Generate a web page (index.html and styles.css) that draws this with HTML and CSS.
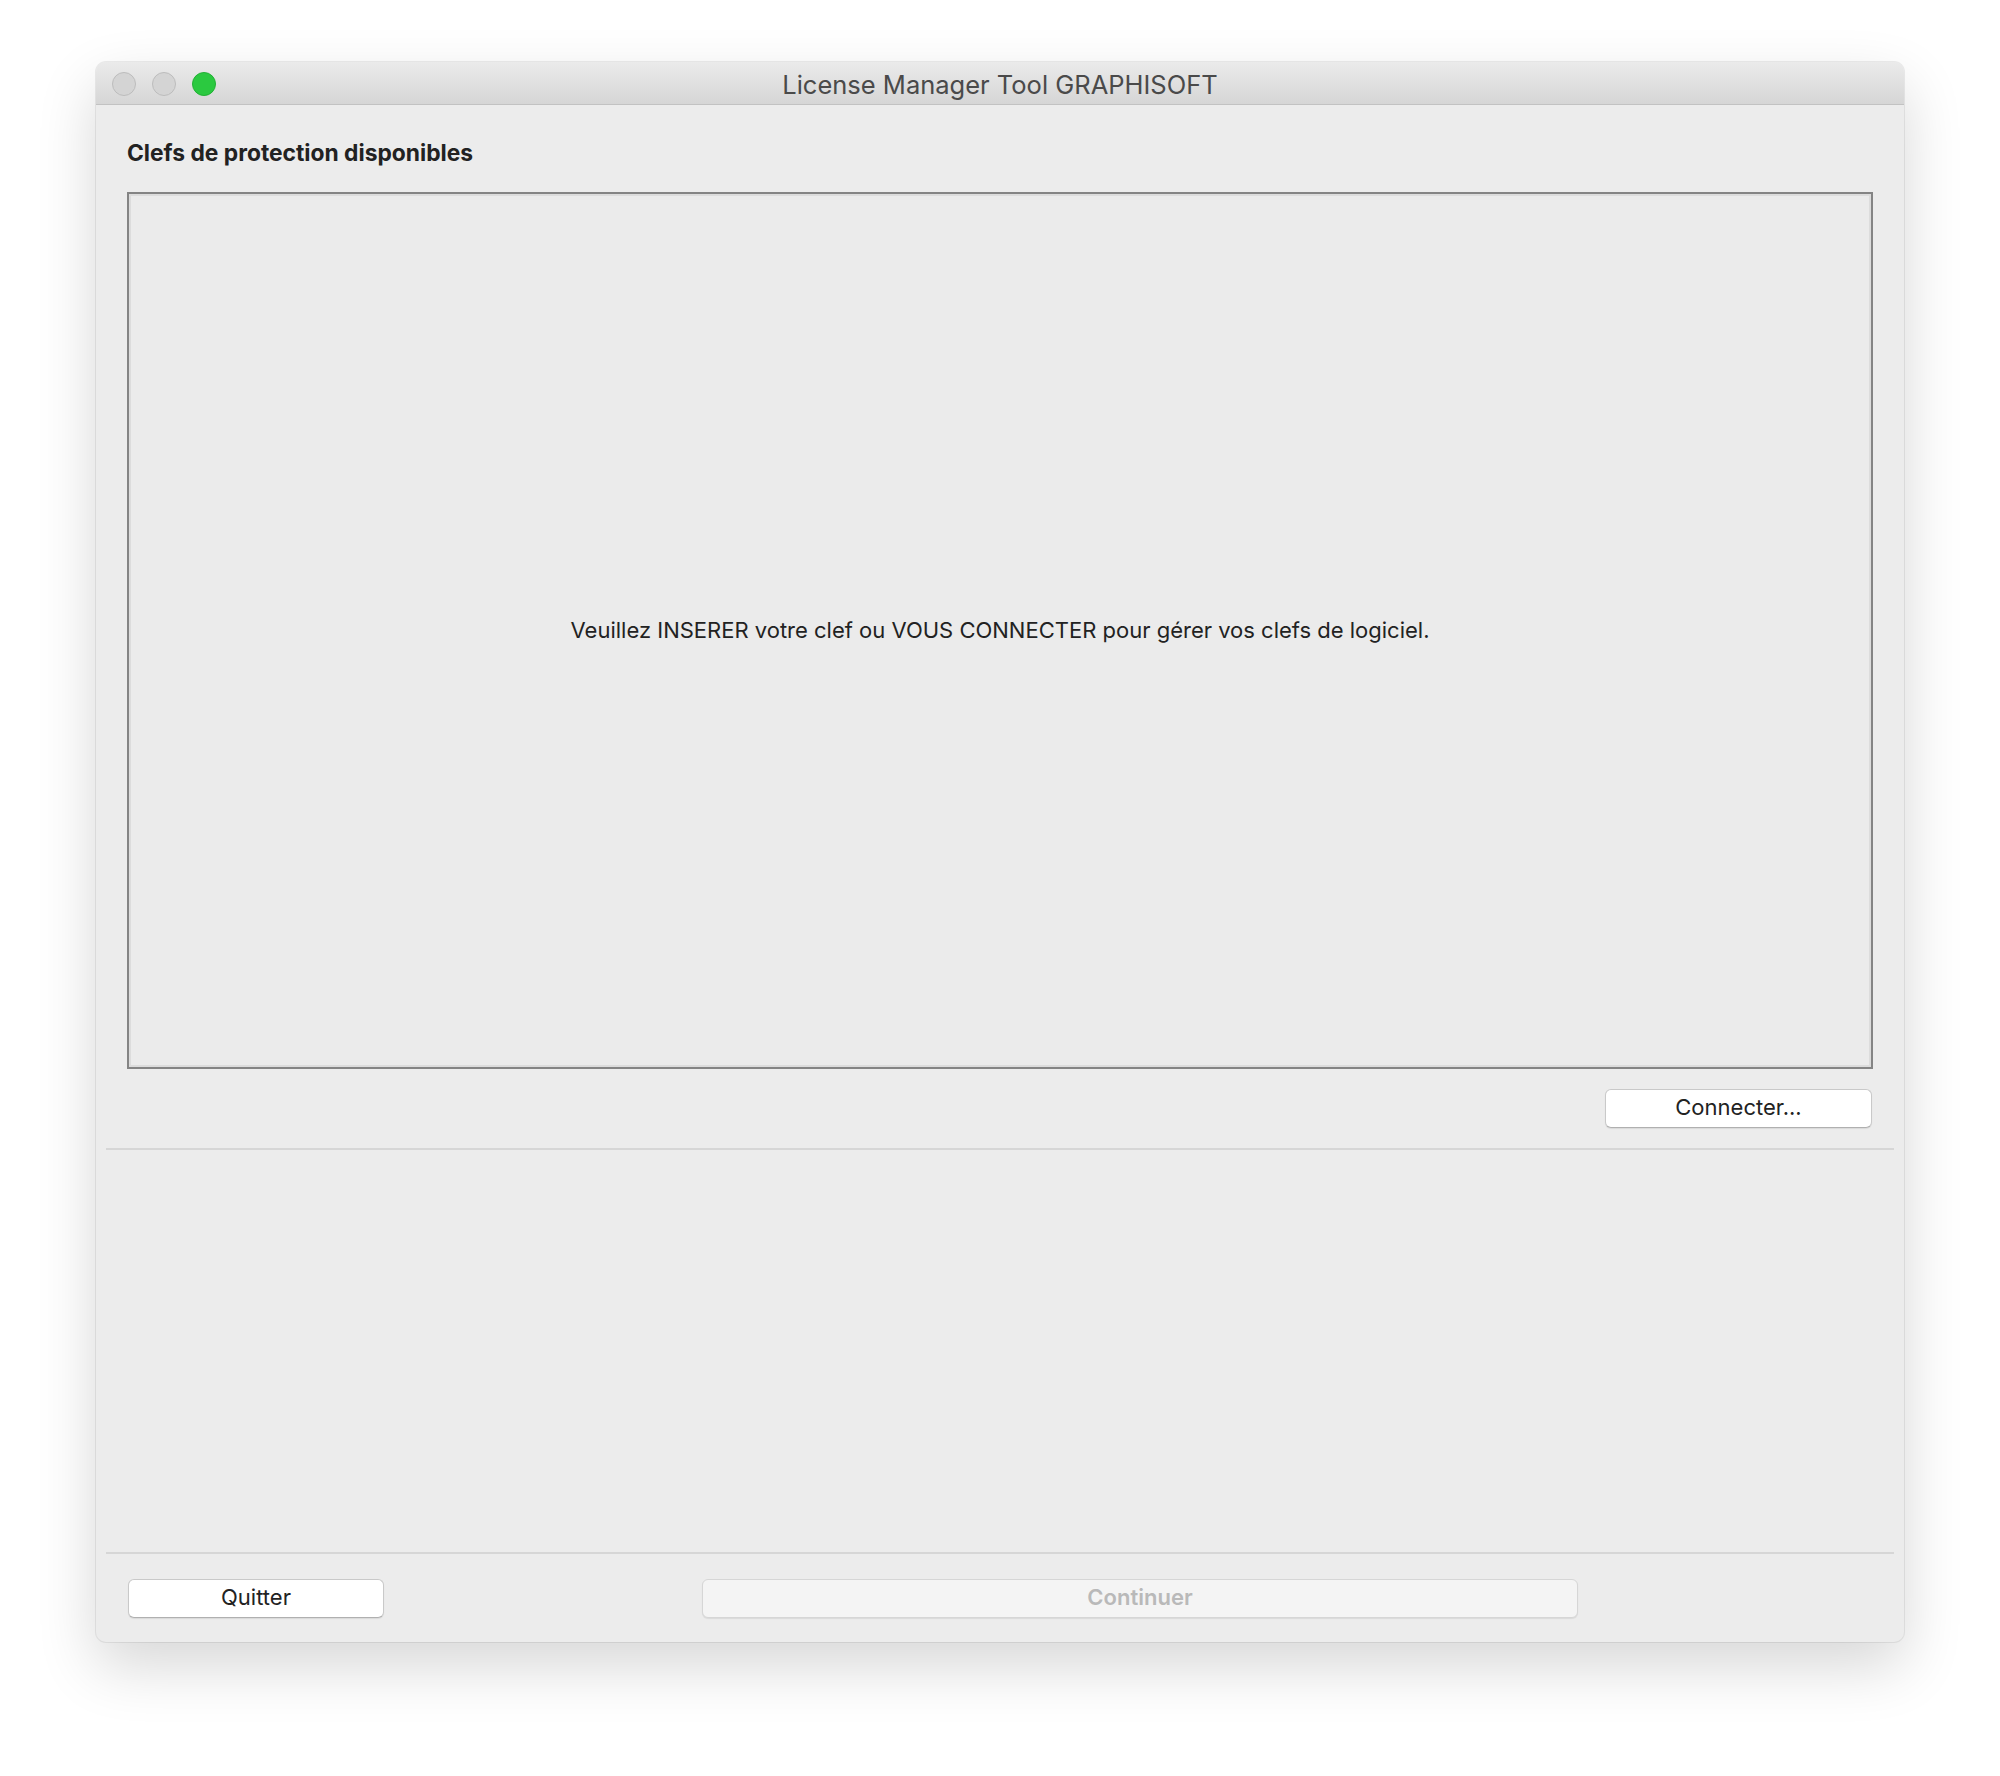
FILE: index.html
```html
<!DOCTYPE html>
<html lang="fr">
<head>
  <meta charset="UTF-8">
  <title>License Manager Tool GRAPHISOFT</title>
  <link rel="stylesheet" href="styles.css">
</head>
<body>

  <div class="window">
    <div class="titlebar">
      <div class="lights">
        <span class="light"></span>
        <span class="light"></span>
        <span class="light green"></span>
      </div>
      <div class="title">License Manager Tool GRAPHISOFT</div>
    </div>

    <div class="content">
      <h3 class="heading">Clefs de protection disponibles</h3>

      <div class="keylist">
        <p>Veuillez INSERER votre clef ou VOUS CONNECTER pour gérer vos clefs de logiciel.</p>
      </div>

      <div class="row-right">
        <button class="btn connect">Connecter...</button>
      </div>
    </div>

    <div class="separator"></div>
    <div class="spacer"></div>
    <div class="separator"></div>

    <div class="footer">
      <button class="btn quit">Quitter</button>
      <button class="btn continue" disabled>Continuer</button>
    </div>
  </div>

</body>
</html>
```

FILE: styles.css
```css
body {
  margin: 0;
  background: #ffffff;
  font-family: Inter, "Liberation Sans", sans-serif;
  color: #222222;
  padding: 62px 0 0 96px;
  height: 1776px;
  box-sizing: border-box;
}

.window {
  width: 1808px;
  height: 1580px;
  background: #ececec;
  border-radius: 10px;
  box-shadow: 0 24px 60px rgba(0, 0, 0, 0.16), 0 0 0 1px rgba(0, 0, 0, 0.07);
  display: flex;
  flex-direction: column;
  overflow: hidden;
}

.titlebar {
  height: 42px;
  background: linear-gradient(to bottom, #ebebeb, #d6d6d6);
  border-bottom: 1px solid #c2c2c2;
  position: relative;
  display: flex;
  align-items: center;
  justify-content: center;
}

.lights {
  position: absolute;
  left: 16px;
  top: 10px;
  display: flex;
  gap: 16px;
}

.light {
  width: 22px;
  height: 22px;
  border-radius: 50%;
  background: #d4d4d4;
  border: 1px solid #bcbcbc;
}

.light.green {
  background: #2bc940;
  border-color: #23b035;
}

.title {
  font-size: 25.5px;
  color: #4a4a4a;
  margin-top: 2px;
}

.content {
  padding: 0 31px;
}

.heading {
  margin: 0;
  padding-top: 36px;
  height: 51px;
  font-size: 22.8px;
  font-weight: 700;
  color: #222222;
  line-height: 24px;
}

.keylist {
  height: 873px;
  border: 2px solid #848484;
  box-shadow: inset 2px 2px 0 #dcdcdc, inset -2px -2px 0 #dcdcdc;
  background: #ebebeb;
  display: flex;
  align-items: center;
  justify-content: center;
}

.keylist p {
  margin: 0 0 2px;
  font-size: 22px;
  color: #222222;
}

.row-right {
  display: flex;
  justify-content: flex-end;
  padding-top: 20px;
  height: 59px;
}

.btn {
  font-family: Inter, "Liberation Sans", sans-serif;
  font-size: 22px;
  height: 39px;
  background: #ffffff;
  color: #222222;
  border: 1px solid #c9c9c9;
  border-bottom-color: #b0b0b0;
  border-radius: 6px;
  box-shadow: 0 1px 1px rgba(0, 0, 0, 0.08);
  padding: 0 0 3px;
}

.connect {
  width: 267px;
  margin-right: 1px;
}

.separator {
  height: 2px;
  background: #d6d6d6;
  margin: 0 10px;
}

.spacer {
  height: 402px;
}

.footer {
  display: flex;
  gap: 318px;
  padding: 25px 0 0 32px;
}

.quit {
  width: 256px;
}

.continue {
  width: 876px;
  background: #f4f4f4;
  color: #b9b9b9;
  font-weight: 600;
  border-color: #d6d6d6;
}
```
